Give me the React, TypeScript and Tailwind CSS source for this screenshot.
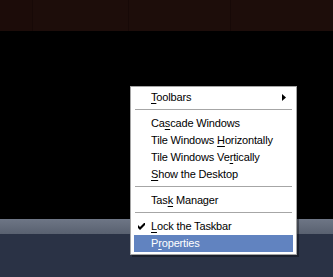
import React from "react";

type Item =
  | { kind: "sep" }
  | { kind: "item"; pre: string; u: string; post: string; arrow?: boolean; check?: boolean; active?: boolean };

const items: Item[] = [
  { kind: "item", pre: "", u: "T", post: "oolbars", arrow: true },
  { kind: "sep" },
  { kind: "item", pre: "Ca", u: "s", post: "cade Windows" },
  { kind: "item", pre: "Tile Windows ", u: "H", post: "orizontally" },
  { kind: "item", pre: "Tile Windows Ve", u: "r", post: "tically" },
  { kind: "item", pre: "", u: "S", post: "how the Desktop" },
  { kind: "sep" },
  { kind: "item", pre: "Tas", u: "k", post: " Manager" },
  { kind: "sep" },
  { kind: "item", pre: "", u: "L", post: "ock the Taskbar", check: true },
  { kind: "item", pre: "P", u: "r", post: "operties", active: true },
];

export default function App() {
  return (
    <div className="relative w-[333px] h-[277px] overflow-hidden bg-black" style={{ fontFamily: '"Liberation Sans", Arial, sans-serif' }}>
      <div className="flex flex-col h-full">
        <div className="h-[31px] bg-[#1d0d0a] flex">
          <div className="w-[32px] bg-[#1c0c09]" />
          <div className="w-[96px] border-l border-[#170907]" />
          <div className="w-[102px] border-l border-[#170907]" />
          <div className="flex-1 border-l border-[#170907]" />
        </div>
        <div className="flex-1 bg-black" />
        <div className="h-[58px] flex flex-col">
          <div className="h-[15px] bg-gradient-to-b from-[#6e7686] to-[#596170]" />
          <div className="flex-1 bg-[#2a3245]" />
        </div>
      </div>

      <div className="absolute left-[130px] top-[86px] w-[167px] bg-white border border-[#a5a5a5] py-[2px] px-[3px] shadow-[2px_2px_0_rgba(0,0,0,0.35)]">
        {items.map((it, i) =>
          it.kind === "sep" ? (
            <div key={i} className="h-[9px] pt-[3px] px-[1px]">
              <div className="h-px bg-[#a6a6a6]" />
            </div>
          ) : (
            <div
              key={i}
              className={`relative h-[17px] flex items-center pl-[17px] text-[11px] leading-none tracking-[-0.15px] ${
                it.active ? "bg-[#6183c0] text-white" : "text-black"
              }`}
            >
              {it.check && (
                <svg className="absolute left-[4px] top-[5px]" width="7" height="7" viewBox="0 0 7 7">
                  <path d="M0 2 L2 4 L6 0 L7 0 L7 2 L2 7 L0 5 Z" fill="#000" />
                </svg>
              )}
              <span>
                {it.pre}
                <span className="underline underline-offset-[2px]">{it.u}</span>
                {it.post}
              </span>
              {it.arrow && (
                <svg className="absolute right-[7px] top-[5px]" width="4" height="7" viewBox="0 0 4 7">
                  <path d="M0 0 L4 3.5 L0 7 Z" fill="#000" />
                </svg>
              )}
            </div>
          )
        )}
      </div>
    </div>
  );
}
